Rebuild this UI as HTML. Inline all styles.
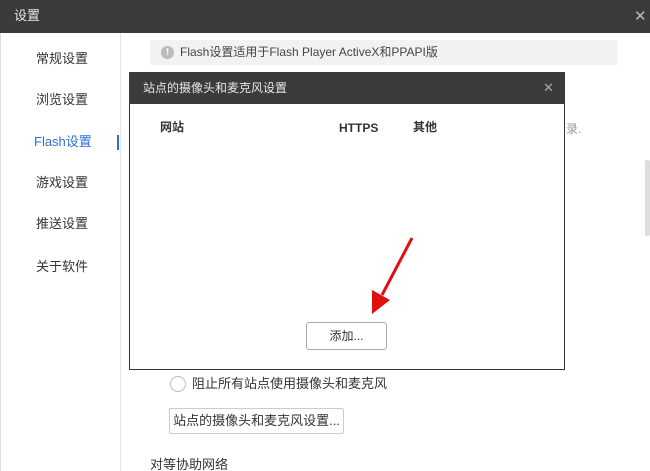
<!DOCTYPE html>
<html><head><meta charset="utf-8"><style>
*{margin:0;padding:0;box-sizing:border-box}
html,body{width:650px;height:471px;overflow:hidden}
body{background:#fff;font-family:"Liberation Sans","Noto Sans CJK SC",sans-serif;font-size:12px;color:#333;position:relative}
.a{position:absolute;line-height:1.2}
</style></head><body>
<div class="a" style="left:0;top:0;width:650px;height:33px;background:#3b3b3b"></div>
<div class="a" style="left:14px;top:8px;color:#e8e8e8;font-size:13px">设置</div>
<div class="a" style="left:634px;top:8px;color:#bbb;font-size:15px">✕</div>
<div class="a" style="left:0;top:33px;width:1px;height:438px;background:#ddd"></div>
<div class="a" style="left:120px;top:33px;width:1px;height:438px;background:#e5e5e5"></div>
<div class="a" style="left:36px;top:51px;font-size:13px">常规设置</div>
<div class="a" style="left:36px;top:92px;font-size:13px">浏览设置</div>
<div class="a" style="left:34px;top:134px;font-size:13px;color:#2c6fd6">Flash设置</div>
<div class="a" style="left:117px;top:135px;width:2px;height:15px;background:#2c6fd6"></div>
<div class="a" style="left:36px;top:175px;font-size:13px">游戏设置</div>
<div class="a" style="left:36px;top:216px;font-size:13px">推送设置</div>
<div class="a" style="left:36px;top:259px;font-size:13px">关于软件</div>
<div class="a" style="left:150px;top:40px;width:467px;height:25px;background:#f2f2f2"></div>
<div class="a" style="left:161px;top:46px;width:13px;height:13px;border-radius:50%;background:#bbb;color:#fff;font-size:10px;text-align:center;line-height:13px;font-weight:bold">!</div>
<div class="a" style="left:180px;top:45px;font-size:12px;color:#444">Flash设置适用于Flash Player ActiveX和PPAPI版</div>
<div class="a" style="left:566px;top:122px;color:#999">录.</div>
<div class="a" style="left:645px;top:160px;width:5px;height:76px;background:#ddd;border-radius:2px"></div>
<div class="a" style="left:129px;top:72px;width:436px;height:298px;border:1px solid #333;background:#fff"></div>
<div class="a" style="left:129px;top:72px;width:436px;height:32px;background:#3b3b3b"></div>
<div class="a" style="left:143px;top:81px;color:#e8e8e8;font-size:12px">站点的摄像头和麦克风设置</div>
<div class="a" style="left:543px;top:80px;color:#aaa;font-size:13px">✕</div>
<div class="a" style="left:160px;top:120px;font-weight:bold">网站</div>
<div class="a" style="left:339px;top:121px;font-weight:bold">HTTPS</div>
<div class="a" style="left:413px;top:120px;font-weight:bold">其他</div>
<svg class="a" style="left:0;top:0" width="650" height="471"><line x1="412" y1="238" x2="382" y2="295" stroke="#e01010" stroke-width="3"/><polygon points="372,314 372,290 390,300" fill="#e01010"/></svg>
<div class="a" style="left:306px;top:322px;width:81px;height:28px;border:1px solid #aaa;border-radius:3px;text-align:center;line-height:26px">添加...</div>
<div class="a" style="left:170px;top:376px;width:16px;height:16px;border:1px solid #bbb;border-radius:50%"></div>
<div class="a" style="left:192px;top:376px;font-size:13px">阻止所有站点使用摄像头和麦克风</div>
<div class="a" style="left:169px;top:408px;width:175px;height:26px;border:1px solid #ccc;border-radius:2px;text-align:center;line-height:24px;font-size:13px">站点的摄像头和麦克风设置...</div>
<div class="a" style="left:150px;top:457px;font-size:13px">对等协助网络</div>
</body></html>
